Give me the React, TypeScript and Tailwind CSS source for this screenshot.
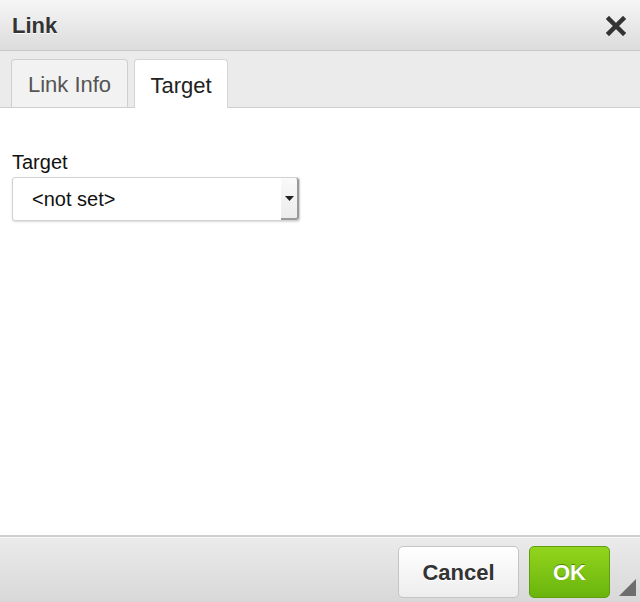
import React from "react";

export default function App() {
  return (
    <div className="w-[640px] h-[602px] flex flex-col bg-white overflow-hidden" style={{ fontFamily: '"Liberation Sans", Arial, sans-serif' }}>
      {/* Title bar */}
      <div className="h-[51px] flex items-center justify-between pl-[12px] pr-[14px] bg-gradient-to-b from-[#f6f6f6] to-[#dcdcdc] border-b border-[#c6c6c6]">
        <span className="text-[22px] font-bold text-[#333] [text-shadow:0_1px_0_#fff]">Link</span>
        <svg width="20" height="20" viewBox="0 0 20 20" className="mt-[1px]">
          <path d="M3 3 L17 17 M17 3 L3 17" stroke="#333" strokeWidth="4.5" strokeLinecap="square" />
        </svg>
      </div>
      {/* Tabs */}
      <div className="h-[57px] bg-[#ebebeb] border-b border-[#cfcfcf] flex items-end pl-[11px] gap-[6px]">
        <div className="h-[48px] w-[117px] bg-[#f2f2f2] border border-b-0 border-[#cfcfcf] rounded-t-[4px] flex items-center justify-center text-[22px] text-[#555] pt-[2px]">
          Link Info
        </div>
        <div className="h-[49px] w-[94px] bg-white border border-b-0 border-[#d4d4d4] rounded-t-[4px] flex items-center justify-center text-[22px] text-[#222] mb-[-1px] pt-[2px]">
          Target
        </div>
      </div>
      {/* Body */}
      <div className="flex-1 bg-white px-[12px] pt-[42px]">
        <div className="text-[20px] text-[#111] leading-[24px]">Target</div>
        <div className="mt-[3px] w-[288px] h-[44px] rounded-[3px] border border-[#d2d2d2] shadow-[0_1px_2px_rgba(0,0,0,0.15)] flex items-stretch bg-white">
          <div className="flex-1 flex items-center pl-[19px] text-[20px] text-[#111]">&lt;not set&gt;</div>
          <div className="w-[18px] flex items-center justify-center bg-gradient-to-b from-[#fafafa] to-[#ececec] border-r-2 border-b-2 border-[#9a9a9a] rounded-r-[3px]">
            <svg width="9" height="5" viewBox="0 0 9 5">
              <path d="M0 0 L9 0 L4.5 5 Z" fill="#222" />
            </svg>
          </div>
        </div>
      </div>
      {/* Footer */}
      <div className="h-[67px] border-t-2 border-[#cfcfcf] bg-gradient-to-b from-[#ebebeb] to-[#d8d8d8] shadow-[inset_0_1px_0_#f7f7f7] flex items-start justify-end pt-[9px] pr-[30px] relative">
        <div className="w-[121px] h-[52px] rounded-[5px] border border-[#c4c4c4] bg-gradient-to-b from-[#ffffff] to-[#ededed] flex items-center justify-center text-[22px] font-bold text-[#333] [text-shadow:0_1px_0_#fff]">
          Cancel
        </div>
        <div className="ml-[10px] w-[81px] h-[52px] rounded-[5px] border border-[#5f9e0c] bg-gradient-to-b from-[#93d51d] to-[#6ab40c] flex items-center justify-center text-[22px] font-bold text-white [text-shadow:0_-1px_0_#4a8a05]">
          OK
        </div>
        <svg width="17" height="17" viewBox="0 0 17 17" className="absolute right-[4px] bottom-[6px]">
          <path d="M17 0 L17 17 L0 17 Z" fill="#6e6e6e" />
        </svg>
      </div>
    </div>
  );
}
